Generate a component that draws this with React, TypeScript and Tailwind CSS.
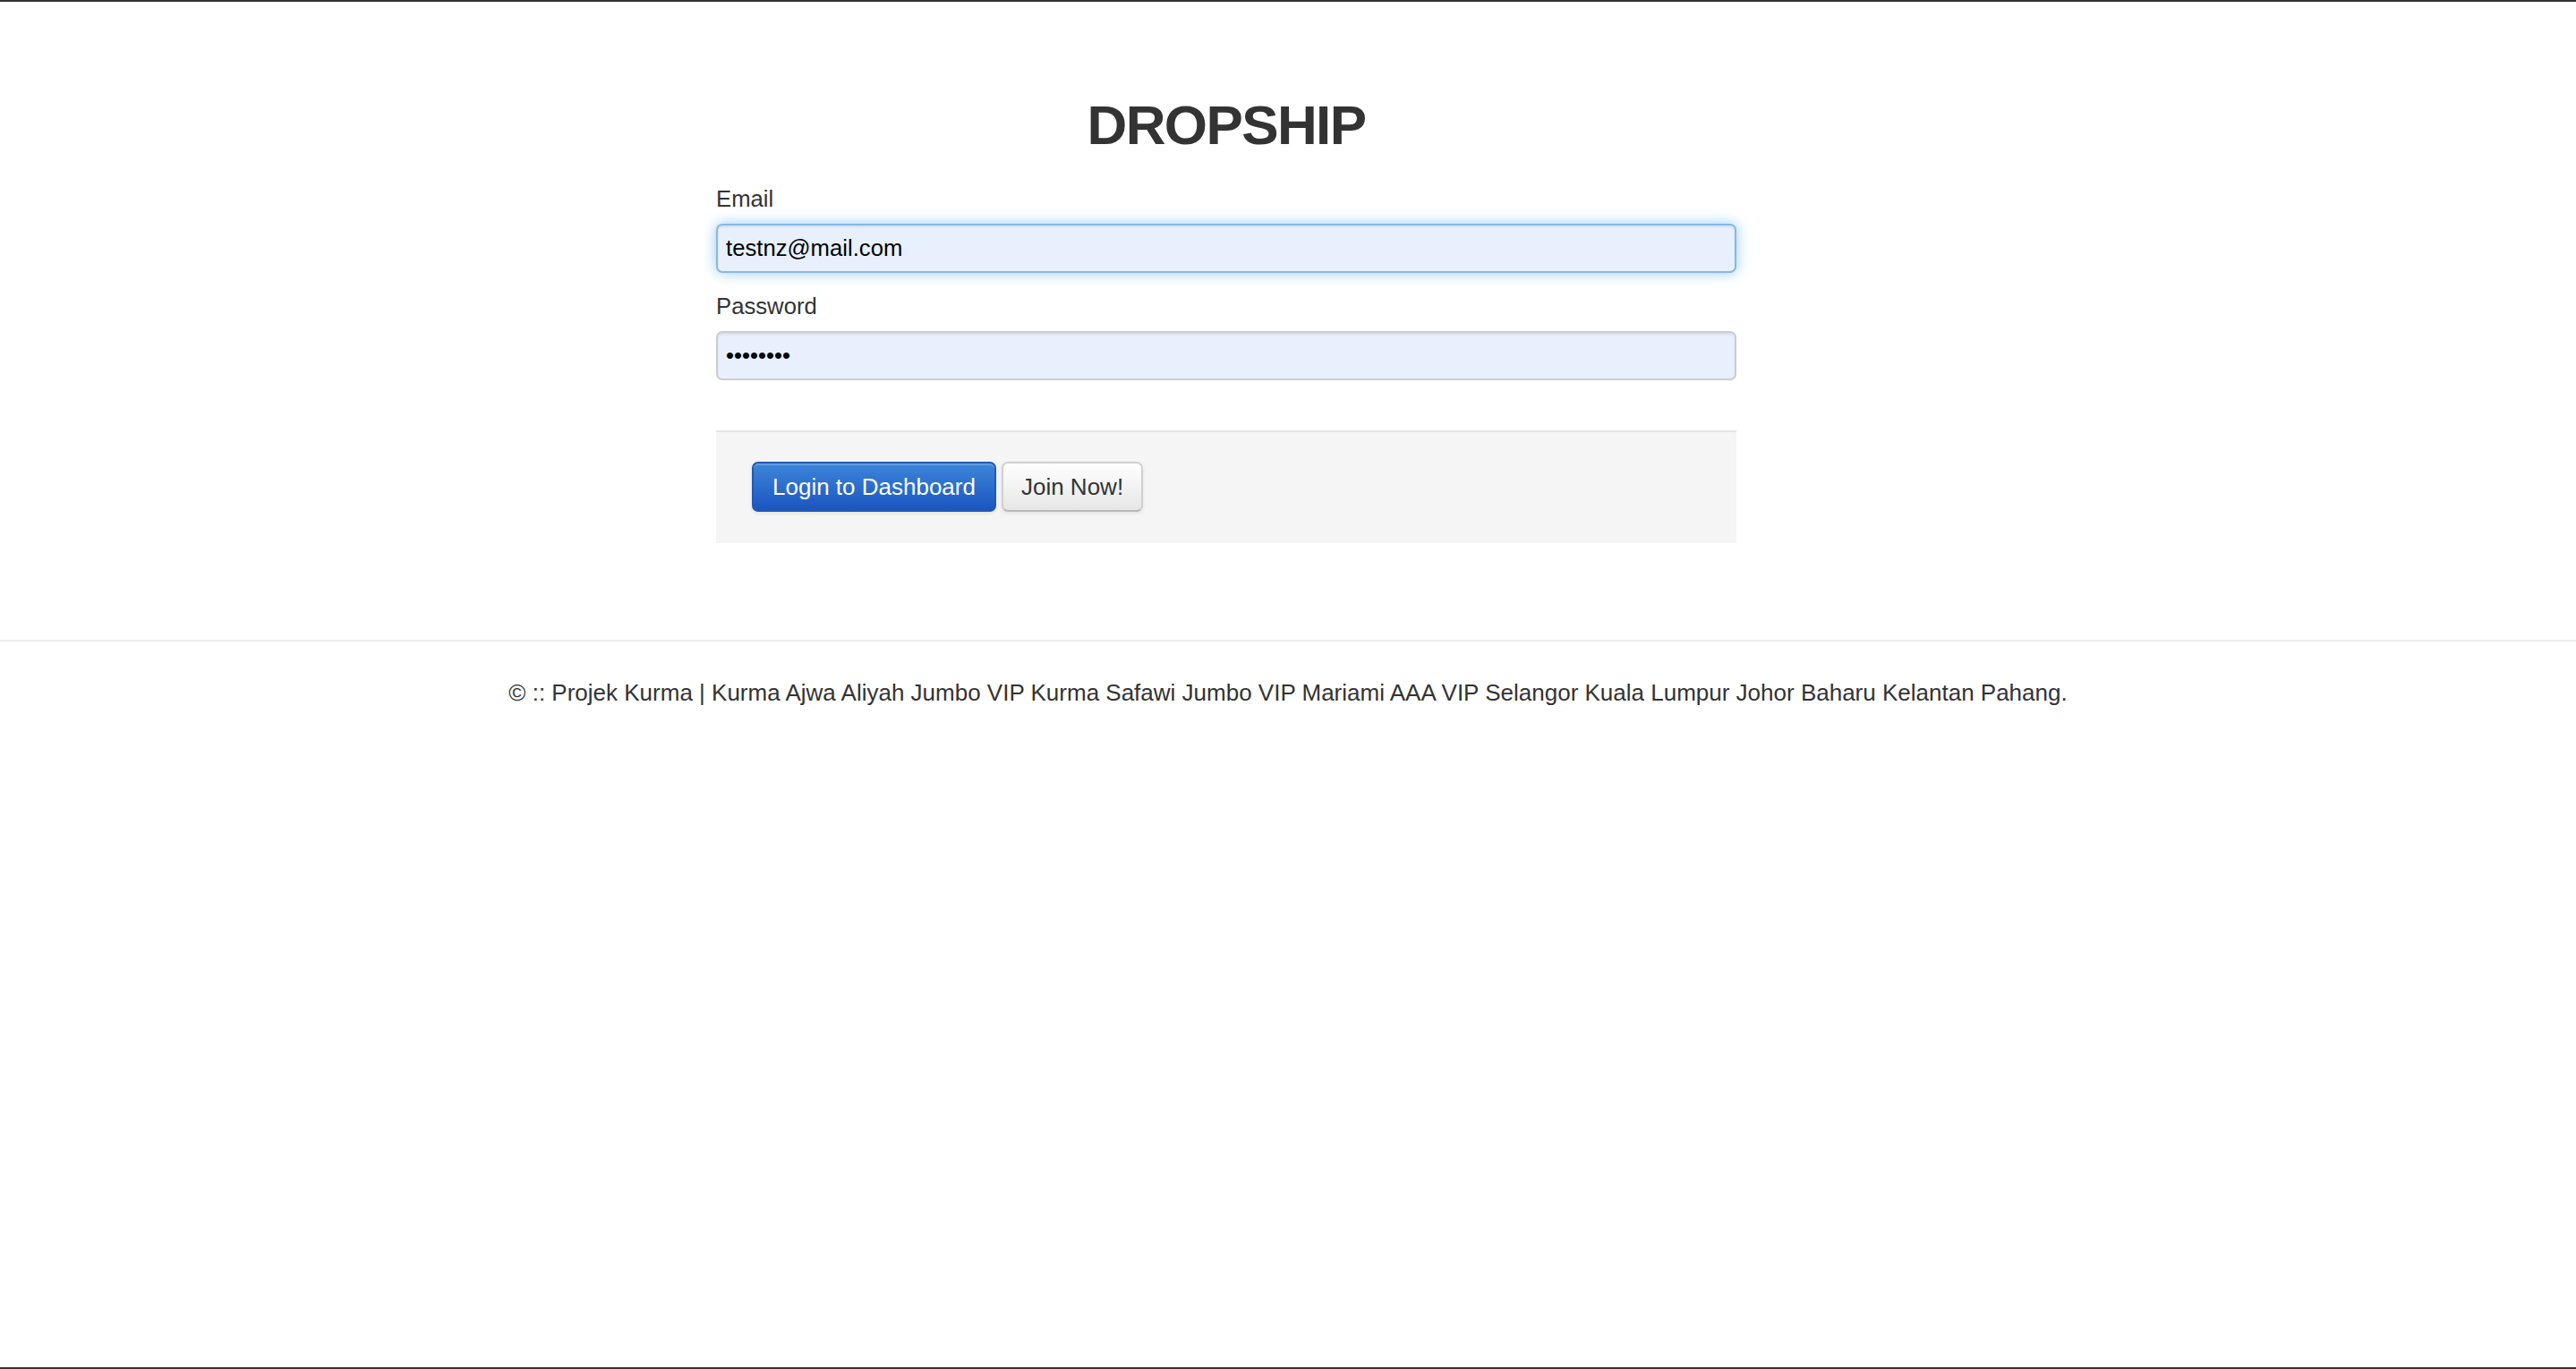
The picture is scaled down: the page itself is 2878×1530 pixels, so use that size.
import React from "react";

export default function App() {
  return (
    <div
      className="min-h-[1530px] w-full bg-white border-t-2 border-b-2 border-[#333333] text-[#333333] flex flex-col"
      style={{ fontFamily: '"Liberation Sans", Arial, Helvetica, sans-serif' }}
    >
      <div className="ml-[800px] w-[1140px] flex flex-col pt-[103px]">
        <h1 className="text-center text-[62px] leading-[69px] font-bold tracking-[-1.6px] text-[#333333]">
          DROPSHIP
        </h1>
        <form className="mt-[30px] flex flex-col" onSubmit={(e) => e.preventDefault()}>
          <label className="text-[25.7px] leading-[37px] mb-[9px]">Email</label>
          <input
            type="text"
            defaultValue="testnz@mail.com"
            className="h-[55px] w-full rounded-[7px] border-2 border-[#86b8e8] bg-[#e8f0fe] px-[9px] text-[25.7px] text-black outline-none shadow-[inset_0_2px_2px_rgba(0,0,0,0.075),0_0_15px_rgba(82,168,236,0.6)]"
          />
          <label className="mt-[19px] text-[25.7px] leading-[37px] mb-[9px]">Password</label>
          <input
            type="password"
            defaultValue="12345678"
            className="h-[55px] w-full rounded-[7px] border-2 border-[#cccccc] bg-[#e8f0fe] px-[9px] text-[25.7px] text-black outline-none shadow-[inset_0_2px_2px_rgba(0,0,0,0.075)]"
          />
          <div className="mt-[56px] border-t-2 border-[#e5e5e5] bg-[#f5f5f5] pt-[33px] pb-[35px] px-[40px] flex items-center gap-[6px]">
            <button
              type="submit"
              className="h-[56px] px-[21px] rounded-[7px] border-2 border-[#2358b8] bg-gradient-to-b from-[#3d86d9] to-[#1c54c0] text-white text-[26px] leading-none shadow-[inset_0_2px_0_rgba(255,255,255,0.2),0_2px_4px_rgba(0,0,0,0.08)]"
            >
              Login to Dashboard
            </button>
            <button
              type="button"
              className="h-[56px] px-[20px] rounded-[7px] border-2 border-[#d0d0d0] border-b-[#b8b8b8] bg-gradient-to-b from-white to-[#e6e6e6] text-[#333333] text-[26px] leading-none shadow-[inset_0_2px_0_rgba(255,255,255,0.2),0_2px_4px_rgba(0,0,0,0.08)]"
            >
              Join Now!
            </button>
          </div>
        </form>
      </div>
      <footer className="mt-[108px] border-t-2 border-[#eeeeee] pt-[39px] text-center text-[26px] leading-[37px] text-[#333333]">
        © :: Projek Kurma | Kurma Ajwa Aliyah Jumbo VIP Kurma Safawi Jumbo VIP Mariami AAA VIP Selangor Kuala Lumpur Johor Baharu Kelantan Pahang.
      </footer>
    </div>
  );
}
